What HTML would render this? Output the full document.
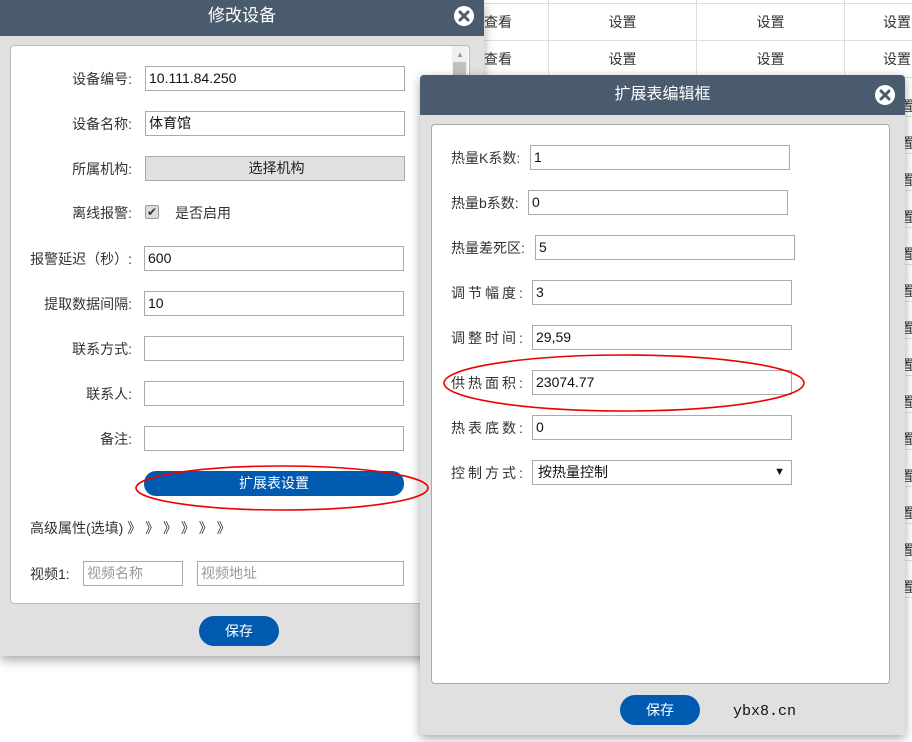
<!DOCTYPE html>
<html><head><meta charset="utf-8"><style>
*{box-sizing:border-box;margin:0;padding:0}
body{width:912px;height:742px;position:relative;overflow:hidden;background:#fff;font-family:"Liberation Sans","Noto Sans CJK SC",sans-serif;font-size:14px;color:#333}
.a{position:absolute}
.inp{position:absolute;height:25px;border:1px solid #aaa;background:#fff;padding-left:3px;line-height:23px;font-size:14px;color:#111}
.lab{position:absolute;font-size:14px;color:#333;line-height:20px;text-align:right}
.btn{position:absolute;background:#005bb0;color:#fff;text-align:center;font-size:14px}
.cell{position:absolute;font-size:14px;color:#333;text-align:center}
</style></head><body>
<div class="a" style="left:484px;top:3px;width:428px;height:1px;background:#ddd"></div>
<div class="a" style="left:484px;top:40px;width:428px;height:1px;background:#ddd"></div>
<div class="a" style="left:484px;top:77px;width:428px;height:1px;background:#ddd"></div>
<div class="a" style="left:548px;top:0;width:1px;height:80px;background:#ddd"></div>
<div class="a" style="left:696px;top:0;width:1px;height:80px;background:#ddd"></div>
<div class="a" style="left:844px;top:0;width:1px;height:80px;background:#ddd"></div>
<div class="cell" style="left:484px;top:12px">查看</div>
<div class="cell" style="left:484px;top:49px">查看</div>
<div class="cell" style="left:549px;top:12px;width:147px">设置</div>
<div class="cell" style="left:549px;top:49px;width:147px">设置</div>
<div class="cell" style="left:697px;top:12px;width:147px">设置</div>
<div class="cell" style="left:697px;top:49px;width:147px">设置</div>
<div class="cell" style="left:883px;top:12px">设置</div>
<div class="cell" style="left:883px;top:49px">设置</div>
<div class="a" style="left:905px;top:80px;width:7px;height:520px;background:repeating-linear-gradient(#fff 0 36px,#ddd 36px 37px)"></div>
<div class="cell" style="left:900px;top:88px;line-height:37px;text-align:left">置<br>置<br>置<br>置<br>置<br>置<br>置<br>置<br>置<br>置<br>置<br>置<br>置<br>置</div>

<div class="a" style="left:0;top:0;width:484px;height:656px;background:#e0e0e0;box-shadow:0 4px 10px rgba(0,0,0,.35)"></div>
<div class="a" style="left:0;top:0;width:484px;height:36px;background:#4a5b6e;color:#fff;font-size:17px;text-align:center;line-height:32px">修改设备</div>
<svg class="a" style="left:454px;top:6px" width="20" height="20"><circle cx="10" cy="10" r="10" fill="#fff"/><path d="M6 6L14 14M14 6L6 14" stroke="#4a5b6e" stroke-width="3" stroke-linecap="round"/></svg>
<div class="a" style="left:10px;top:45px;width:460px;height:559px;background:#fff;border:1px solid #bbb;border-radius:4px"></div>
<div class="a" style="left:452px;top:46px;width:16px;height:40px;background:#f0f0f0"></div>
<div class="a" style="left:453px;top:62px;width:13px;height:14px;background:#c1c1c1"></div>
<div class="a" style="left:456px;top:50px;font-size:8px;color:#999">▲</div>
<div class="lab" style="left:20px;top:69px;width:112px">设备编号:</div>
<div class="inp" style="left:145px;top:66px;width:260px">10.111.84.250</div>
<div class="lab" style="left:20px;top:114px;width:112px">设备名称:</div>
<div class="inp" style="left:145px;top:111px;width:260px">体育馆</div>
<div class="lab" style="left:20px;top:159px;width:112px">所属机构:</div>
<div class="inp" style="left:145px;top:156px;width:260px;background:#e0e0e0;text-align:center;color:#222">选择机构</div>
<div class="lab" style="left:20px;top:203px;width:112px">离线报警:</div>
<div class="a" style="left:145px;top:205px;width:14px;height:14px;border:1px solid #999;border-radius:2px;background:#ddd;font-size:12px;line-height:12px;text-align:center;color:#333">✔</div>
<div class="a" style="left:175px;top:203px;line-height:20px">是否启用</div>
<div class="lab" style="left:20px;top:249px;width:112px">报警延迟（秒）:</div>
<div class="inp" style="left:144px;top:246px;width:260px">600</div>
<div class="lab" style="left:20px;top:294px;width:112px">提取数据间隔:</div>
<div class="inp" style="left:144px;top:291px;width:260px">10</div>
<div class="lab" style="left:20px;top:339px;width:112px">联系方式:</div>
<div class="inp" style="left:144px;top:336px;width:260px"></div>
<div class="lab" style="left:20px;top:384px;width:112px">联系人:</div>
<div class="inp" style="left:144px;top:381px;width:260px"></div>
<div class="lab" style="left:20px;top:429px;width:112px">备注:</div>
<div class="inp" style="left:144px;top:426px;width:260px"></div>
<div class="btn" style="left:144px;top:471px;width:260px;height:25px;border-radius:12px;line-height:25px">扩展表设置</div>
<div class="a" style="left:30px;top:518px;line-height:20px">高级属性(选填) <span style="letter-spacing:0">》 》 》 》 》 》</span></div>
<div class="a" style="left:30px;top:564px;line-height:20px">视频1:</div>
<div class="inp" style="left:83px;top:561px;width:100px;color:#999">视频名称</div>
<div class="inp" style="left:197px;top:561px;width:207px;color:#999">视频地址</div>
<div class="btn" style="left:199px;top:616px;width:80px;height:30px;border-radius:15px;line-height:30px">保存</div>

<div class="a" style="left:420px;top:75px;width:485px;height:660px;background:#e0e0e0;border-radius:4px 4px 0 0;box-shadow:0 3px 10px rgba(0,0,0,.35)"></div>
<div class="a" style="left:420px;top:75px;width:485px;height:40px;background:#4a5b6e;border-radius:4px 4px 0 0;color:#fff;font-size:16px;text-align:center;line-height:40px">扩展表编辑框</div>
<svg class="a" style="left:875px;top:85px" width="20" height="20"><circle cx="10" cy="10" r="10" fill="#fff"/><path d="M6 6L14 14M14 6L6 14" stroke="#4a5b6e" stroke-width="3" stroke-linecap="round"/></svg>
<div class="a" style="left:431px;top:124px;width:459px;height:560px;background:#fff;border:1px solid #aaa;border-radius:4px"></div>
<div class="a" style="left:451px;top:148px;line-height:20px">热量K系数:</div>
<div class="inp" style="left:530px;top:145px;width:260px">1</div>
<div class="a" style="left:451px;top:193px;line-height:20px">热量b系数:</div>
<div class="inp" style="left:528px;top:190px;width:260px">0</div>
<div class="a" style="left:451px;top:238px;line-height:20px">热量差死区:</div>
<div class="inp" style="left:535px;top:235px;width:260px">5</div>
<div class="a" style="left:451px;top:283px;line-height:20px;letter-spacing:3px">调节幅度:</div>
<div class="inp" style="left:532px;top:280px;width:260px">3</div>
<div class="a" style="left:451px;top:328px;line-height:20px;letter-spacing:3px">调整时间:</div>
<div class="inp" style="left:532px;top:325px;width:260px">29,59</div>
<div class="a" style="left:451px;top:373px;line-height:20px;letter-spacing:3px">供热面积:</div>
<div class="inp" style="left:532px;top:370px;width:260px">23074.77</div>
<div class="a" style="left:451px;top:418px;line-height:20px;letter-spacing:3px">热表底数:</div>
<div class="inp" style="left:532px;top:415px;width:260px">0</div>
<div class="a" style="left:451px;top:463px;line-height:20px;letter-spacing:3px">控制方式:</div>
<div class="inp" style="left:532px;top:460px;width:260px;padding-left:5px">按热量控制<span style="position:absolute;right:6px;font-size:11px">▼</span></div>
<div class="btn" style="left:620px;top:695px;width:80px;height:30px;border-radius:15px;line-height:30px">保存</div>
<div class="a" style="left:733px;top:703px;font-family:'Liberation Mono',monospace;font-size:15px;color:#111">ybx8.cn</div>

<svg class="a" style="left:0;top:0" width="912" height="742">
<ellipse cx="282" cy="488" rx="146" ry="22" fill="none" stroke="#e00" stroke-width="1.6"/>
<ellipse cx="624" cy="383" rx="180" ry="28" fill="none" stroke="#e00" stroke-width="1.6"/>
</svg>
</body></html>
